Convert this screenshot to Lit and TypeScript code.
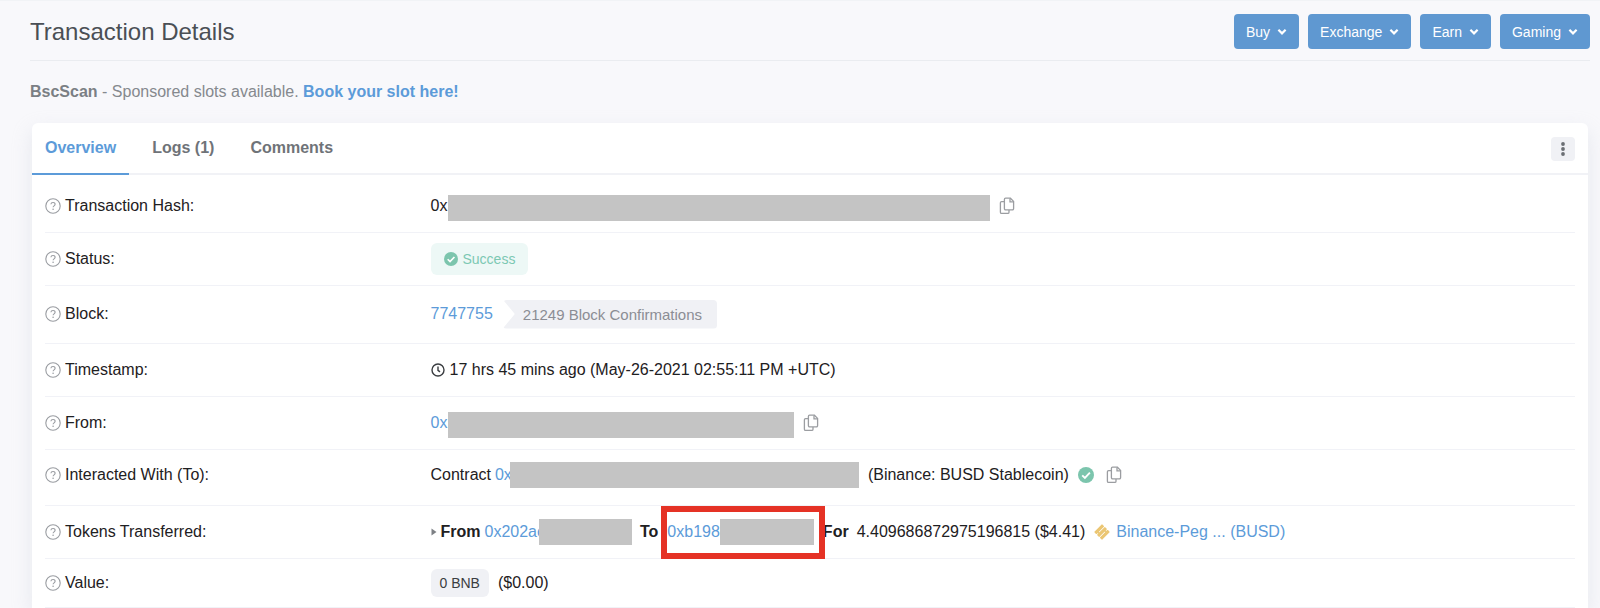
import { LitElement, html, css, svg } from "lit";
import { customElement, state } from "lit/decorators.js";

const chevron = html`<svg class="chev" viewBox="0 0 10 8" aria-hidden="true"><path d="M1.4 1.8 5 5.4 8.6 1.8" /></svg>`;

const help = html`<svg class="help" viewBox="0 0 16 16" aria-hidden="true">
  <circle cx="8" cy="8" r="7.2" />
  <path d="M5.9 6.3C6 5.1 6.9 4.5 8 4.5s2.1.7 2.1 1.8c0 1.5-2 1.6-2 3" />
  <circle class="dot" cx="8.1" cy="11.3" r=".8" />
</svg>`;

const copyIcon = html`<svg class="copy-icon" viewBox="0 0 16 18" aria-hidden="true">
  <path d="M6.6 1.2h4.8l3.2 3.2v7.2a1.2 1.2 0 0 1-1.2 1.2H6.6a1.2 1.2 0 0 1-1.2-1.2V2.4a1.2 1.2 0 0 1 1.2-1.2z" />
  <path d="M11 1.4v3.4h3.4" />
  <path d="M5.2 4.6H2.6a1.2 1.2 0 0 0-1.2 1.2v9.4a1.2 1.2 0 0 0 1.2 1.2h6.2a1.2 1.2 0 0 0 1.2-1.2v-2.2" />
</svg>`;

const copyButton = (what: string) => html`<button class="copy" aria-label="Copy ${what}">${copyIcon}</button>`;

const check = html`<svg class="check" viewBox="0 0 16 16" aria-hidden="true">
  <circle cx="8" cy="8" r="8" /><path d="M4.2 8.3 6.9 11 11.9 5.7" />
</svg>`;

const clock = html`<svg class="clock" viewBox="0 0 14 14" aria-hidden="true">
  <circle cx="7" cy="7" r="6" /><path d="M7 3.4v3.9l2 1.6" />
</svg>`;

const stripes = [0, 1, 2].map((i) => svg`<rect x="2.4" y=${2.4 + i * 4} width="11.2" height="3.2" rx=".5" />`);

const coin = html`<svg class="coin" viewBox="0 0 16 16" aria-hidden="true">
  <g transform="rotate(-45 8 8)">
    ${stripes}
    <path d="M5 5.4v1.4M11 9.2v1.4" />
  </g>
</svg>`;

const mask = (width: number, kind = "") =>
  html`<span class="mask ${kind}" style="width:${width}px"></span>`;

interface Row {
  label: string;
  kind?: string;
  value: unknown;
}

const rows: Row[] = [
  {
    label: "Transaction Hash:",
    value: html`<span>0x</span>${mask(542, "low")}${copyButton("transaction hash")}`,
  },
  {
    label: "Status:",
    value: html`<span class="status">${check}Success</span>`,
  },
  {
    label: "Block:",
    kind: "tall",
    value: html`<a href="#block">7747755</a><span class="confirmations">21249 Block Confirmations</span>`,
  },
  {
    label: "Timestamp:",
    value: html`${clock}<span>17 hrs 45 mins ago (May-26-2021 02:55:11 PM +UTC)</span>`,
  },
  {
    label: "From:",
    value: html`<a href="#from">0x</a>${mask(346, "low")}${copyButton("sender address")}`,
  },
  {
    label: "Interacted With (To):",
    kind: "roomy",
    value: html`<span class="word">Contract</span><a href="#contract">0x</a>${mask(349, "over")}
      <span class="name">(Binance: BUSD Stablecoin)</span>${check}${copyButton("contract address")}`,
  },
  {
    label: "Tokens Transferred:",
    value: html`<svg class="caret" viewBox="0 0 6 8" aria-hidden="true"><path d="M.5.5 5.5 4l-5 3.5z" /></svg>
      <b class="word">From</b><a href="#sender">0x202ac</a>${mask(93, "over wide")}
      <b class="to">To</b>
      <span class="marked"><a href="#receiver">0xb198</a>${mask(94)}</span>
      <b class="for">For</b>
      <span>4.409686872975196815 ($4.41)</span>
      ${coin}<a href="#token">Binance-Peg ... (BUSD)</a>`,
  },
  {
    label: "Value:",
    kind: "short",
    value: html`<span class="amount">0 BNB</span><span>($0.00)</span>`,
  },
];

@customElement("app-root")
export class AppRoot extends LitElement {
  @state() private active = "Overview";

  static styles = css`
    :host {
      display: block;
      min-height: 100vh;
      box-sizing: border-box;
      overflow: hidden;
      padding: 0 10px 0 30px;
      border-top: 1px solid #f1f3f6;
      background: #f8f8fb;
      color: #1e2022;
      font: 16px/24px "Liberation Sans", Arial, Helvetica, sans-serif;
    }
    * { box-sizing: border-box; }
    button { font: inherit; border: 0; cursor: pointer; }
    a { color: #5c9bd9; text-decoration: none; }
    svg { flex: none; fill: none; }

    .top {
      display: flex;
      align-items: center;
      justify-content: space-between;
      padding: 13px 0 11px;
      border-bottom: 1px solid #eaecf0;
    }
    h1 {
      margin: 0;
      font-size: 24px;
      line-height: 35px;
      font-weight: 400;
      color: #4a4f55;
    }
    nav { display: flex; gap: 9px; }
    .menu {
      display: flex;
      align-items: center;
      gap: 7px;
      height: 35px;
      padding: 0 12px;
      border-radius: 4px;
      background: #5f98d1;
      color: #fff;
      font-size: 14px;
    }
    .chev { width: 10px; height: 8px; stroke: #fff; stroke-width: 2.2; }

    .sponsor { margin: 0; padding: 19px 0; color: #85898e; }
    .sponsor b { color: #7b7f84; }
    .sponsor a { font-weight: 700; }

    .card {
      margin: 0 2px;
      background: #fff;
      border-radius: 6px 6px 0 0;
      box-shadow: 0 8px 20px rgba(189, 197, 209, 0.3);
    }
    .bar {
      display: flex;
      align-items: center;
      justify-content: space-between;
      padding-right: 13px;
      box-shadow: inset 0 -2px #f1f2f6;
    }
    .tabs { display: flex; gap: 10px; }
    .tab {
      padding: 13px;
      border-bottom: 2px solid transparent;
      background: none;
      color: #6f7378;
      font-weight: 700;
    }
    .tab.on { color: #5c9bd9; border-color: #5c9bd9; }
    .more {
      display: grid;
      place-items: center;
      width: 24px;
      height: 24px;
      padding: 0;
      border-radius: 4px;
      background: #f0f1f5;
    }
    .more svg { width: 4px; height: 14px; fill: #6b6f74; }

    dl { margin: 0; padding: 5px 13px 0; }
    .row {
      display: grid;
      grid-template-columns: 1fr 3fr;
      column-gap: 4px;
      align-items: center;
      min-height: 53px;
      padding-bottom: 1px;
      border-bottom: 1px solid #f1f2f7;
    }
    .row.tall { min-height: 58px; }
    .row.roomy { min-height: 56px; padding-bottom: 6px; }
    .row.short { min-height: 49px; }
    dt, dd { display: flex; align-items: center; margin: 0; white-space: nowrap; }
    dt { gap: 4px; }
    .help { width: 16px; height: 16px; stroke: #999ca1; stroke-width: 1.1; }
    .help .dot { fill: #999ca1; stroke: none; }

    .mask { flex: none; height: 26px; background: #c4c4c4; }
    .mask.low { margin: 5px 0 0 1px; }
    .mask.over { position: relative; margin-left: -2px; }
    .mask.wide { margin-left: -6px; }
    .word { margin-right: 4px; }
    .name { margin: 0 9px; }
    .copy { display: flex; margin-left: 9px; padding: 0; background: none; }
    .check + .copy { margin-left: 12px; }
    .copy-icon { width: 16px; height: 18px; stroke: #9b9da1; stroke-width: 1.3; }
    .check { width: 16px; height: 16px; fill: #7cc5ad; }
    .check path { fill: none; stroke: #fff; stroke-width: 1.9; }
    .clock { width: 14px; height: 14px; margin-right: 5px; stroke: #3a3d41; stroke-width: 1.4; }

    .status {
      display: flex;
      align-items: center;
      gap: 5px;
      height: 32px;
      padding: 0 13px;
      border-radius: 6px;
      background: #edf8f6;
      color: #7cc8b3;
      font-size: 14px;
    }
    .status .check { width: 14px; height: 14px; }
    .confirmations {
      margin-left: 10px;
      padding: 3px 15px 2px 20px;
      border-radius: 4px;
      background: #f0f1f5;
      color: #8b8d94;
      font-size: 15px;
      clip-path: polygon(0 0, 100% 0, 100% 100%, 0 100%, 12px 50%);
    }
    .caret { width: 6px; height: 8px; margin-right: 4px; fill: #7d8085; }
    .to { margin: 0 9px 0 8px; }
    .marked { position: relative; display: flex; align-items: center; }
    .marked::after {
      content: "";
      position: absolute;
      inset: -13px -11px -14px -6px;
      border: 6px solid #e53225;
    }
    .for { margin: 0 8px 0 9px; }
    .coin { width: 16px; height: 16px; margin: 0 6px 0 9px; fill: #ebc673; }
    .coin path { stroke: #ebc673; stroke-width: 2; }
    .amount {
      margin-right: 9px;
      padding: 2px 9px;
      border-radius: 6px;
      background: #f0f1f5;
      color: #3b3e42;
      font-size: 14px;
    }
  `;

  render() {
    return html`
      <header class="top">
        <h1>Transaction Details</h1>
        <nav>
          ${["Buy", "Exchange", "Earn", "Gaming"].map((m) => html`<button class="menu">${m}${chevron}</button>`)}
        </nav>
      </header>
      <p class="sponsor"><b>BscScan</b> - Sponsored slots available. <a href="#book">Book your slot here!</a></p>
      <main class="card">
        <div class="bar">
          <div class="tabs" role="tablist">
            ${["Overview", "Logs (1)", "Comments"].map(
              (t) => html`<button
                class="tab ${t === this.active ? "on" : ""}"
                role="tab"
                aria-selected=${t === this.active ? "true" : "false"}
                @click=${() => (this.active = t)}
              >${t}</button>`
            )}
          </div>
          <button class="more" aria-label="More options">
            <svg viewBox="0 0 4 14"><circle cx="2" cy="2" r="1.9" /><circle cx="2" cy="7" r="1.9" /><circle cx="2" cy="12" r="1.9" /></svg>
          </button>
        </div>
        <dl>
          ${rows.map(
            (r) => html`<div class="row ${r.kind ?? ""}">
              <dt>${help}${r.label}</dt>
              <dd>${r.value}</dd>
            </div>`
          )}
        </dl>
      </main>
    `;
  }
}
